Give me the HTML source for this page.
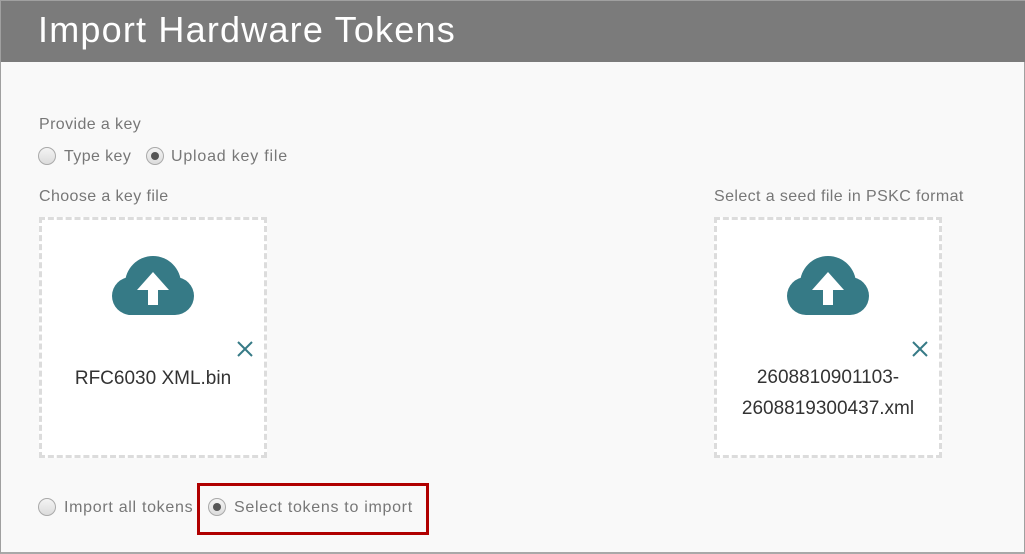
<!DOCTYPE html>
<html><head><style>
*{margin:0;padding:0;box-sizing:border-box}
body{width:1025px;height:554px;background:#f9f9f9;font-family:"Liberation Sans",sans-serif;position:relative;overflow:hidden;border:1px solid #a0a0a0;border-bottom:2px solid #a8a8a8}
.hdr{position:absolute;left:0;top:0;width:1025px;height:61px;background:#7b7b7b;color:#fff;font-size:36px;padding-left:37px;line-height:58px;letter-spacing:1.2px}
.t{position:absolute;color:#777;font-size:16px;white-space:nowrap;letter-spacing:0.4px}
.r{position:absolute;width:18px;height:18px;border-radius:50%;border:1px solid #aaa;background:linear-gradient(#f4f4f4,#dcdcdc)}
.r.on::after{content:"";position:absolute;left:4px;top:4px;width:8px;height:8px;border-radius:50%;background:#555}
.box{position:absolute;top:216px;width:228px;height:241px;border:3px dashed #dcdcdc;background:#fff}
.cloud{position:absolute;left:68px;top:34px}
.x{position:absolute;top:120px;left:194px}
.fn{position:absolute;left:0;right:0;text-align:center;color:#333;font-size:19px;line-height:31px}
.red{position:absolute;left:196px;top:482px;width:232px;height:52px;border:3px solid #b00000}
</style></head><body>
<div class="hdr">Import Hardware Tokens</div>
<div class="t" style="left:38px;top:115px">Provide a key</div>
<span class="r" style="left:37px;top:146px"></span><div class="t" style="left:63px;top:147px">Type key</div>
<span class="r on" style="left:145px;top:146px"></span><div class="t" style="left:170px;top:147px;letter-spacing:0.8px">Upload key file</div>
<div class="t" style="left:38px;top:187px">Choose a key file</div>
<div class="t" style="left:713px;top:187px">Select a seed file in PSKC format</div>
<div class="box" style="left:38px">
<svg class="cloud" width="86" height="62" viewBox="0 0 86 62"><g fill="#367a86"><circle cx="43" cy="30" r="28"/><circle cx="21" cy="42" r="19"/><circle cx="65" cy="42" r="19"/><rect x="21" y="40" width="44" height="21"/></g><path d="M43 18 L59 36 L48 36 L48 51 L38 51 L38 36 L27 36 Z" fill="#fff"/></svg>
<svg class="x" width="18" height="18" viewBox="0 0 18 18"><path d="M2 2L16 16M16 2L2 16" stroke="#367a86" stroke-width="2"/></svg>
<div class="fn" style="top:143px">RFC6030 XML.bin</div>
</div>
<div class="box" style="left:713px">
<svg class="cloud" width="86" height="62" viewBox="0 0 86 62"><g fill="#367a86"><circle cx="43" cy="30" r="28"/><circle cx="21" cy="42" r="19"/><circle cx="65" cy="42" r="19"/><rect x="21" y="40" width="44" height="21"/></g><path d="M43 18 L59 36 L48 36 L48 51 L38 51 L38 36 L27 36 Z" fill="#fff"/></svg>
<svg class="x" width="18" height="18" viewBox="0 0 18 18"><path d="M2 2L16 16M16 2L2 16" stroke="#367a86" stroke-width="2"/></svg>
<div class="fn" style="top:142px">2608810901103-<br>2608819300437.xml</div>
</div>
<span class="r" style="left:37px;top:497px"></span><div class="t" style="left:63px;top:498px;letter-spacing:0.7px">Import all tokens</div>
<span class="r on" style="left:207px;top:497px"></span><div class="t" style="left:233px;top:498px;letter-spacing:0.7px">Select tokens to import</div>
<div class="red"></div>
</body></html>
